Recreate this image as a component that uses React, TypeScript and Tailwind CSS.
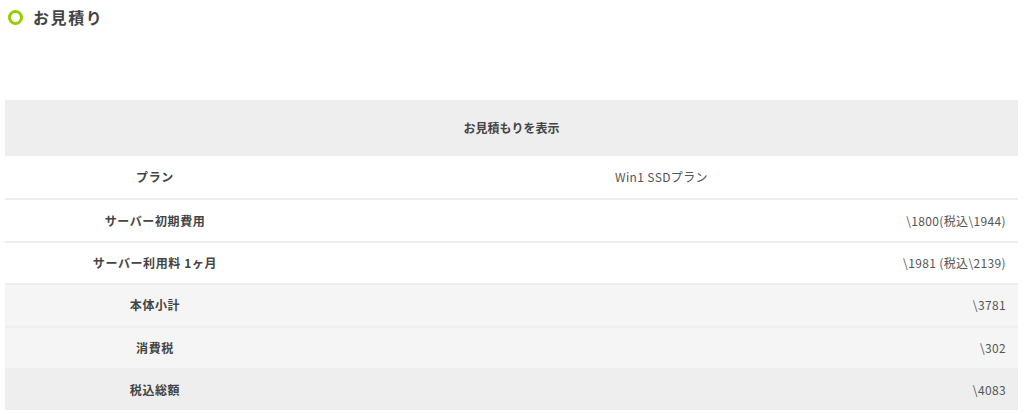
const rows = [
  { label: 'プラン', value: 'Win1 SSDプラン', center: true, bg: 'bg-white' },
  { label: 'サーバー初期費用', value: '\\1800(税込\\1944)', bg: 'bg-white' },
  { label: 'サーバー利用料 1ヶ月', value: '\\1981 (税込\\2139)', bg: 'bg-white' },
  { label: '本体小計', value: '\\3781', bg: 'bg-[#f5f5f5]' },
  { label: '消費税', value: '\\302', bg: 'bg-[#f5f5f5]' },
  { label: '税込総額', value: '\\4083', bg: 'bg-[#eeeeee]' },
];

export default function App() {
  return (
    <div className="min-h-[414px] bg-white pl-[5px] pr-[6px] font-['Noto_Sans_CJK_JP','Noto_Sans',sans-serif] text-[#333]">
      {/* Section title */}
      <div className="flex h-[34px] items-center gap-[10px] pl-[3px]">
        <span className="inline-block h-[15px] w-[15px] rounded-full border-[3px] border-[#99cc00]" />
        <h2 className="text-[16px] font-bold tracking-[0.1em] text-[#444]">お見積り</h2>
      </div>

      <div className="mt-[66px]">
        {/* Header */}
        <div className="flex h-[56px] items-center justify-center bg-[#eeeeee] text-[12px] font-semibold text-[#444]">
          お見積もりを表示
        </div>

        {rows.map((row, i) => (
          <div
            key={i}
            className={`flex h-[42.4px] items-center text-[12px] ${row.bg} ${i > 0 ? 'border-t-2 border-[#eeeeee]' : ''}`}
          >
            <div className="w-[300px] text-center font-semibold tracking-[0.05em] text-[#444]">{row.label}</div>
            <div
              className={`flex-1 tracking-[0.03em] text-[#555] ${row.center ? 'text-center' : 'pr-[12px] text-right'}`}
            >
              {row.value}
            </div>
          </div>
        ))}
      </div>
    </div>
  );
}
